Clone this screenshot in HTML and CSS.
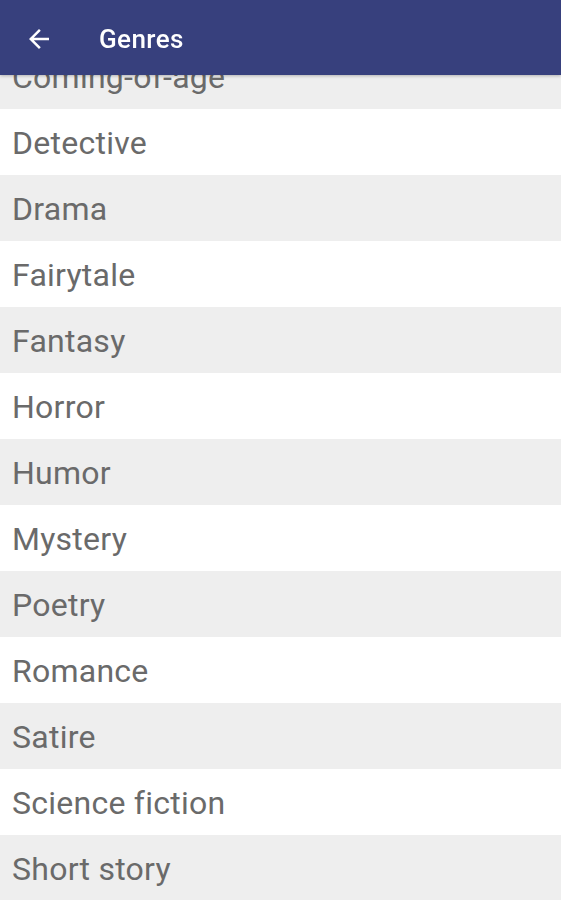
FILE: index.html
```html
<!DOCTYPE html>
<html>
<head>
<meta charset="utf-8">
<link rel="stylesheet" href="styles.css">
</head>
<body>
<header class="appbar">
  <svg class="back" width="30" height="30" viewBox="0 0 24 24"><path d="M20 11H7.83l5.59-5.59L12 4l-8 8 8 8 1.41-1.41L7.83 13H20v-2z" fill="#fff"/></svg>
  <span class="title">Genres</span>
</header>
<ul class="list">
  <li class="row">Coming-of-age</li>
  <li class="row">Detective</li>
  <li class="row">Drama</li>
  <li class="row">Fairytale</li>
  <li class="row">Fantasy</li>
  <li class="row">Horror</li>
  <li class="row">Humor</li>
  <li class="row">Mystery</li>
  <li class="row">Poetry</li>
  <li class="row">Romance</li>
  <li class="row">Satire</li>
  <li class="row">Science fiction</li>
  <li class="row">Short story</li>
</ul>
</body>
</html>
```
FILE: styles.css
```css
html, body {
  margin: 0;
  padding: 0;
  background: #fff;
  overflow: hidden;
  height: 900px;
}
body {
  font-family: Roboto, "Liberation Sans", sans-serif;
}
.appbar {
  position: fixed;
  top: 0;
  left: 0;
  right: 0;
  height: 75px;
  padding-top: 3px;
  box-sizing: border-box;
  background: #37407d;
  display: flex;
  align-items: center;
  z-index: 2;
  box-shadow: 0 1px 3px rgba(0,0,0,0.25);
}
.back {
  margin-left: 24px;
}
.title {
  margin-left: 45px;
  color: #fff;
  font-size: 26px;
  font-weight: 500;
  letter-spacing: 0.4px;
}
.list {
  list-style: none;
  margin: 0;
  padding: 43px 0 0 0;
}
.row {
  height: 66px;
  display: flex;
  align-items: center;
  padding-left: 12px;
  padding-top: 2px;
  box-sizing: border-box;
  font-size: 32px;
  letter-spacing: 0.25px;
  color: #6a6a6a;
}
.row:nth-child(odd) {
  background: #eeeeee;
}
```
